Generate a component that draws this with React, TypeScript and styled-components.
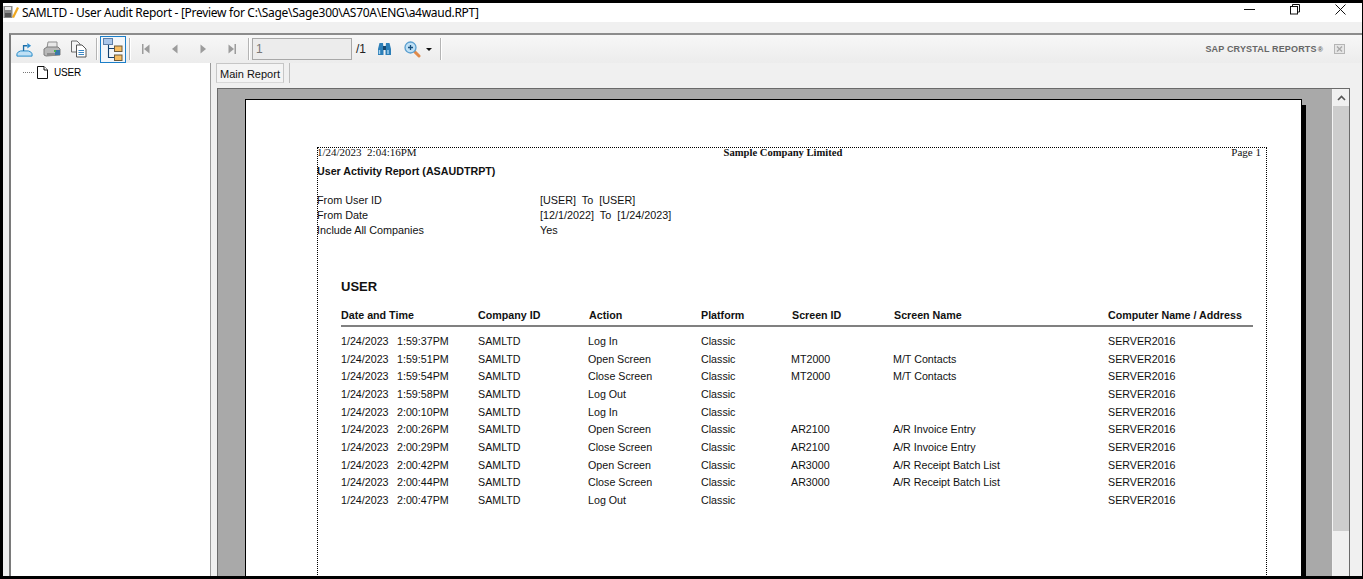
import React from 'react';
import styled, { createGlobalStyle } from 'styled-components';

const GlobalStyle = createGlobalStyle`
  html, body {
    margin: 0;
    padding: 0;
    width: 1363px;
    height: 579px;
    overflow: hidden;
    background: #000;
  }
`;

const Screen = styled.div`
  width: 1363px;
  height: 579px;
  box-sizing: border-box;
  border: solid #000;
  border-width: 3px 1px 3px 3px;
  display: flex;
  flex-direction: column;
  background: #f0f0f0;
  overflow: hidden;
  font-family: "Liberation Sans", Arial, sans-serif;
`;

const TitleBar = styled.div`
  height: 19px;
  flex: none;
  background: #fff;
  display: flex;
  align-items: center;
  color: #000;
`;

const TitleText = styled.span`
  font-family: "Noto Sans", sans-serif;
  font-size: 12px;
  margin-left: 2px;
  white-space: nowrap;
  letter-spacing: -0.29px;
`;

const WindowButtons = styled.div`
  margin-left: auto;
  align-self: flex-start;
  padding: 1px 16px 0 0;
  display: flex;
  gap: 35px;
`;

const Body = styled.div`
  flex: 1;
  min-height: 0;
  padding: 11px 0 0 6px;
  display: flex;
`;

const ViewerFrame = styled.div`
  flex: 1;
  min-width: 0;
  border-top: 2px solid #8c8c8c;
  border-left: 2px solid #7a7a7a;
  display: flex;
  flex-direction: column;
`;

const Toolbar = styled.div`
  height: 28px;
  flex: none;
  display: flex;
  align-items: center;
  background: linear-gradient(#f7f7f7, #ececec);
  padding-right: 17px;
`;

const ToolSlot = styled.div<{ $w?: number }>`
  width: ${(p) => p.$w ?? 27}px;
  height: 28px;
  flex: none;
  display: flex;
  align-items: center;
  justify-content: center;
`;

const ToggleButton = styled.div`
  width: 26px;
  height: 27px;
  box-sizing: border-box;
  border: 1px solid #1b7ec8;
  background: #f3f6f9;
  display: flex;
  align-items: center;
  justify-content: center;
  flex: none;
`;

const ToolSep = styled.div<{ $l: number; $r: number }>`
  width: 1px;
  height: 22px;
  background: #b4b4b4;
  border-right: 1px solid #fff;
  margin: 0 ${(p) => p.$r}px 0 ${(p) => p.$l}px;
  flex: none;
`;

const PageInput = styled.div`
  width: 100px;
  height: 22px;
  box-sizing: border-box;
  border: 1px solid #a8a8a8;
  background: #ececec;
  color: #777;
  font-size: 12px;
  line-height: 20px;
  padding-left: 3px;
  flex: none;
`;

const PageCount = styled.span`
  font-size: 12px;
  color: #222;
  margin-left: 4px;
  width: 14px;
  flex: none;
`;

const Brand = styled.div`
  margin-left: auto;
  display: flex;
  align-items: center;
  font-size: 9px;
  font-weight: bold;
  color: #666;
  letter-spacing: 0.16px;
  white-space: nowrap;
`;

const BrandMark = styled.span`
  font-size: 7px;
  margin-left: 1px;
  margin-right: 11px;
`;

const Panes = styled.div`
  flex: 1;
  min-height: 0;
  display: flex;
`;

const TreePane = styled.div`
  width: 199px;
  flex: none;
  background: #fff;
  border-right: 1px solid #9a9a9a;
  padding-top: 3px;
`;

const TreeRow = styled.div`
  display: flex;
  align-items: center;
  height: 13px;
  padding-left: 12px;
  font-size: 10px;
  color: #000;
`;

const TreeDots = styled.span`
  width: 11px;
  border-top: 1px dotted #777;
  margin-right: 3px;
`;

const TreeLabel = styled.span`
  margin-left: 6px;
  letter-spacing: -0.2px;
`;

const ReportPane = styled.div`
  flex: 1;
  min-width: 0;
  display: flex;
  flex-direction: column;
  padding-left: 6px;
`;

const TabStrip = styled.div`
  height: 25px;
  flex: none;
  display: flex;
  align-items: flex-start;
  margin-left: -1px;
`;

const Tab = styled.div`
  height: 20px;
  width: 68px;
  box-sizing: border-box;
  border: 1px solid #c6c6c6;
  border-bottom-color: #d8d8d8;
  background: #f4f4f4;
  font-size: 11px;
  line-height: 20px;
  text-align: center;
  color: #111;
`;

const TabEnd = styled.div`
  width: 1px;
  height: 20px;
  margin-left: 5px;
  background: #bdbdbd;
`;

const ViewerRow = styled.div`
  flex: 1;
  min-height: 0;
  display: flex;
  margin-right: 12px;
  border: solid #6a6a6a;
  border-width: 1px 1px 0 1px;
  background: #a9a9a9;
  overflow: hidden;
`;

const PageArea = styled.div`
  flex: 1;
  min-width: 0;
  padding: 10px 0 0 27px;
  overflow: hidden;
`;

const Page = styled.div`
  width: 1057px;
  height: 600px;
  box-sizing: border-box;
  background: #fff;
  border: 1px solid #000;
  box-shadow: 4px 6px 0 #000;
  padding: 47px 0 0 71px;
`;

const ReportBox = styled.div`
  width: 950px;
  height: 540px;
  box-sizing: border-box;
  border: 1px dotted #000;
  border-bottom: 0;
  color: #111;
`;

const ReportInner = styled.div`
  margin-left: -1px;
`;

const PageHeader = styled.div`
  display: grid;
  grid-template-columns: 1fr 1fr 1fr;
  font-family: "Liberation Serif", "Times New Roman", serif;
  font-size: 11px;
  line-height: 9px;
  height: 9px;
  padding-right: 5px;
  white-space: pre;
`;

const CompanyName = styled.span`
  font-size: 10.6px;
  font-weight: bold;
  text-align: center;
  margin-left: -12px;
`;

const PageNum = styled.span`
  text-align: right;
`;

const ReportTitle = styled.div`
  font-size: 10.7px;
  font-weight: bold;
  line-height: 14px;
  margin-top: 7px;
`;

const Params = styled.div`
  margin-top: 15px;
  display: grid;
  grid-template-columns: 223px 1fr;
  grid-auto-rows: 15px;
  font-size: 10.8px;
  line-height: 15px;
  white-space: pre;
`;

const Section = styled.div`
  padding-left: 24px;
  padding-right: 13px;
`;

const GroupName = styled.div`
  margin-top: 41px;
  font-size: 13px;
  font-weight: bold;
  line-height: 16px;
`;

const HeadRow = styled.div`
  margin-top: 13px;
  display: grid;
  grid-template-columns: 137px 111px 112px 91px 102px 214px 1fr;
  font-size: 10.7px;
  font-weight: bold;
  line-height: 14px;
  padding-bottom: 3px;
  border-bottom: 2px solid #808080;
  white-space: nowrap;
`;

const Rows = styled.div`
  margin-top: 5px;
  display: grid;
  grid-auto-rows: 17.7px;
`;

const Row = styled.div`
  display: grid;
  grid-template-columns: 137px 110px 113px 90px 102px 215px 1fr;
  align-items: center;
  font-size: 10.7px;
  line-height: 14px;
  white-space: nowrap;
`;

const RowDate = styled.span`
  display: inline-block;
  width: 56px;
`;

const ScrollBar = styled.div`
  width: 16px;
  flex: none;
  display: flex;
  flex-direction: column;
  background: #f0f0f0;
  border-left: 1px solid #f4f4f4;
`;

const ScrollArrow = styled.div`
  height: 17px;
  display: flex;
  align-items: center;
  justify-content: center;
`;

const ScrollThumb = styled.div`
  height: 425px;
  background: #cdcdcd;
`;

const AppIcon = () => (
  <svg width="17" height="15" viewBox="0 0 17 15">
    <rect x="0.5" y="1" width="9" height="12" fill="#8a8a8a" />
    <rect x="2" y="2" width="6" height="3" fill="#e8e8e8" />
    <rect x="2" y="8" width="6" height="4" fill="#555" />
    <path d="M9 12 L14 2 L16 3 L11 13 Z" fill="#f0a820" />
  </svg>
);

const ExportIcon = () => (
  <svg width="17" height="17" viewBox="0 0 18 17" fill="none">
    <path d="M1 15.5 L1 13 Q2 10.5 5 10 L13 10 Q16 10.5 17 13 L17 15.5 Z" fill="#bfe0f5" stroke="#1c86c8" />
    <path d="M8 10 L8 4.5 L12 4.5" stroke="#1c6ea8" strokeWidth="1.4" />
    <path d="M12 1.5 L16 4.5 L12 7.5 Z" fill="#2f8fd0" />
  </svg>
);

const PrintIcon = () => (
  <svg width="18" height="17" viewBox="0 0 18 17">
    <path d="M5 1 L14 1 L14 7 L4 7 Z" fill="#e8e8e8" stroke="#8f8f8f" />
    <path d="M1 8 L4 6 L15 6 L17 8 L17 14 L3 15 L1 14 Z" fill="#b8b8b8" stroke="#7d7d7d" />
    <rect x="12" y="9" width="5" height="5" fill="#3b77a8" />
    <rect x="11" y="9" width="2" height="2" fill="#4caf50" />
    <rect x="4" y="12" width="8" height="3" fill="#8e8e8e" />
  </svg>
);

const CopyIcon = () => (
  <svg width="17" height="18" viewBox="0 0 17 18">
    <path d="M1.5 1 L7 1 L10 4 L10 12 L1.5 12 Z" fill="#f4f4f4" stroke="#6b6b6b" />
    <path d="M6.5 5 L12 5 L16 9 L16 17 L6.5 17 Z" fill="#fff" stroke="#555" />
    <path d="M8.5 10.5 H14 M8.5 12.5 H14 M8.5 14.5 H14" stroke="#3b87c4" />
  </svg>
);

const TreeToggleIcon = () => (
  <svg width="20" height="23" viewBox="0 0 20 23" fill="none">
    <path d="M5.5 7 L5.5 19.5 L11 19.5 M5.5 10.5 L11 10.5" stroke="#12406e" strokeWidth="1.1" />
    <rect x="0.5" y="0.5" width="9" height="6" fill="#a9c6ea" stroke="#5d7ea6" />
    <rect x="11.5" y="8" width="7.5" height="5.5" fill="#f6bd62" stroke="#6d5a3a" />
    <rect x="11.5" y="17" width="7.5" height="5.5" fill="#f6bd62" stroke="#6d5a3a" />
  </svg>
);

const NavIcon = ({ dir, bar }: { dir: 'left' | 'right'; bar?: boolean }) => (
  <svg width="9" height="10" viewBox="0 0 9 10" fill="#9c9c9c">
    {dir === 'left' ? <path d="M7.5 0.5 L7.5 9.5 L2 5 Z" /> : <path d="M1.5 0.5 L1.5 9.5 L7 5 Z" />}
    {bar && <rect x={dir === 'left' ? 0 : 7.5} y="0" width="1.5" height="10" />}
  </svg>
);

const BinocularsIcon = () => (
  <svg width="15" height="14" viewBox="0 0 15 14">
    <path d="M2.5 1 L6 1 L6.5 6 L6.5 13 L1 13 L1 7 Z" fill="#2d7fb8" />
    <path d="M9 1 L12.5 1 L14 7 L14 13 L8.5 13 L8.5 6 Z" fill="#2d7fb8" />
    <rect x="6" y="4" width="3" height="4" fill="#16476e" />
    <path d="M2.5 8 V12 M11 8 V12" stroke="#a9d4ef" strokeWidth="1.4" />
  </svg>
);

const ZoomIcon = () => (
  <svg width="17" height="17" viewBox="0 0 17 17">
    <path d="M10 10 L15 15" stroke="#e08a4a" strokeWidth="3" strokeLinecap="round" />
    <circle cx="6.5" cy="6.5" r="5.5" fill="#bfe0f5" stroke="#5a9fcf" strokeWidth="1.3" />
    <path d="M4 6.5 H9 M6.5 4 V9" stroke="#17507f" strokeWidth="1.3" />
  </svg>
);

const Caret = () => (
  <svg width="6" height="3" viewBox="0 0 6 3">
    <path d="M0 0 H6 L3 3 Z" fill="#111" />
  </svg>
);

const MinIcon = () => (
  <svg width="11" height="11" viewBox="0 0 11 11">
    <path d="M0 5.5 H11" stroke="#111" />
  </svg>
);

const RestoreIcon = () => (
  <svg width="10" height="11" viewBox="0 0 10 11" fill="none" stroke="#111">
    <rect x="0.5" y="2.5" width="7" height="7.5" />
    <path d="M2.5 2.5 V0.5 H9.5 V8 H7.5" />
  </svg>
);

const CloseIcon = () => (
  <svg width="11" height="11" viewBox="0 0 11 11" stroke="#111">
    <path d="M0.5 0.5 L10.5 10.5 M10.5 0.5 L0.5 10.5" />
  </svg>
);

const BrandClose = () => (
  <svg width="11" height="10" viewBox="0 0 11 10" fill="none">
    <rect x="0.5" y="0.5" width="10" height="9" fill="#e6e6e6" stroke="#b5b5b5" />
    <path d="M3 2.5 L8 7.5 M8 2.5 L3 7.5" stroke="#a8a8a8" strokeWidth="1.3" />
  </svg>
);

const DocIcon = () => (
  <svg width="11" height="13" viewBox="0 0 11 13" fill="#fff" stroke="#111">
    <path d="M0.5 0.5 H7 L10.5 4 V12.5 H0.5 Z" />
    <path d="M7 0.5 V4 H10.5" />
  </svg>
);

const UpArrow = () => (
  <svg width="9" height="6" viewBox="0 0 9 6" fill="none">
    <path d="M1 5 L4.5 1.5 L8 5" stroke="#555" strokeWidth="1.6" />
  </svg>
);

interface AuditRow {
  date: string;
  time: string;
  action: string;
  screenId?: string;
  screenName?: string;
}

const auditRows: AuditRow[] = [
  { date: '1/24/2023', time: '1:59:37PM', action: 'Log In' },
  { date: '1/24/2023', time: '1:59:51PM', action: 'Open Screen', screenId: 'MT2000', screenName: 'M/T Contacts' },
  { date: '1/24/2023', time: '1:59:54PM', action: 'Close Screen', screenId: 'MT2000', screenName: 'M/T Contacts' },
  { date: '1/24/2023', time: '1:59:58PM', action: 'Log Out' },
  { date: '1/24/2023', time: '2:00:10PM', action: 'Log In' },
  { date: '1/24/2023', time: '2:00:26PM', action: 'Open Screen', screenId: 'AR2100', screenName: 'A/R Invoice Entry' },
  { date: '1/24/2023', time: '2:00:29PM', action: 'Close Screen', screenId: 'AR2100', screenName: 'A/R Invoice Entry' },
  { date: '1/24/2023', time: '2:00:42PM', action: 'Open Screen', screenId: 'AR3000', screenName: 'A/R Receipt Batch List' },
  { date: '1/24/2023', time: '2:00:44PM', action: 'Close Screen', screenId: 'AR3000', screenName: 'A/R Receipt Batch List' },
  { date: '1/24/2023', time: '2:00:47PM', action: 'Log Out' },
];

export default function App() {
  return (
    <Screen>
      <GlobalStyle />
      <TitleBar>
        <AppIcon />
        <TitleText>SAMLTD - User Audit Report - [Preview for C:\Sage\Sage300\AS70A\ENG\a4waud.RPT]</TitleText>
        <WindowButtons>
          <MinIcon />
          <RestoreIcon />
          <CloseIcon />
        </WindowButtons>
      </TitleBar>
      <Body>
        <ViewerFrame>
          <Toolbar>
            <ToolSlot><ExportIcon /></ToolSlot>
            <ToolSlot><PrintIcon /></ToolSlot>
            <ToolSlot><CopyIcon /></ToolSlot>
            <ToolSep $l={4} $r={2} />
            <ToggleButton><TreeToggleIcon /></ToggleButton>
            <ToolSep $l={3} $r={1} />
            <ToolSlot $w={28.5}><NavIcon dir="left" bar /></ToolSlot>
            <ToolSlot $w={28.5}><NavIcon dir="left" /></ToolSlot>
            <ToolSlot $w={28.5}><NavIcon dir="right" /></ToolSlot>
            <ToolSlot $w={28.5}><NavIcon dir="right" bar /></ToolSlot>
            <ToolSep $l={2} $r={2} />
            <PageInput>1</PageInput>
            <PageCount>/1</PageCount>
            <ToolSlot $w={28}><BinocularsIcon /></ToolSlot>
            <ToolSlot $w={28}><ZoomIcon /></ToolSlot>
            <Caret />
            <ToolSep $l={8} $r={0} />
            <Brand>
              SAP CRYSTAL REPORTS<BrandMark>®</BrandMark>
              <BrandClose />
            </Brand>
          </Toolbar>
          <Panes>
            <TreePane>
              <TreeRow>
                <TreeDots />
                <DocIcon />
                <TreeLabel>USER</TreeLabel>
              </TreeRow>
            </TreePane>
            <ReportPane>
              <TabStrip>
                <Tab>Main Report</Tab>
                <TabEnd />
              </TabStrip>
              <ViewerRow>
                <PageArea>
                  <Page>
                    <ReportBox>
                      <ReportInner>
                        <PageHeader>
                          <span>1/24/2023  2:04:16PM</span>
                          <CompanyName>Sample Company Limited</CompanyName>
                          <PageNum>Page 1</PageNum>
                        </PageHeader>
                        <ReportTitle>User Activity Report (ASAUDTRPT)</ReportTitle>
                        <Params>
                          <span>From User ID</span>
                          <span>[USER]  To  [USER]</span>
                          <span>From Date</span>
                          <span>[12/1/2022]  To  [1/24/2023]</span>
                          <span>Include All Companies</span>
                          <span>Yes</span>
                        </Params>
                        <Section>
                          <GroupName>USER</GroupName>
                          <HeadRow>
                            <span>Date and Time</span>
                            <span>Company ID</span>
                            <span>Action</span>
                            <span>Platform</span>
                            <span>Screen ID</span>
                            <span>Screen Name</span>
                            <span>Computer Name / Address</span>
                          </HeadRow>
                          <Rows>
                            {auditRows.map((row) => (
                              <Row key={row.time}>
                                <span><RowDate>{row.date}</RowDate>{row.time}</span>
                                <span>SAMLTD</span>
                                <span>{row.action}</span>
                                <span>Classic</span>
                                <span>{row.screenId}</span>
                                <span>{row.screenName}</span>
                                <span>SERVER2016</span>
                              </Row>
                            ))}
                          </Rows>
                        </Section>
                      </ReportInner>
                    </ReportBox>
                  </Page>
                </PageArea>
                <ScrollBar>
                  <ScrollArrow><UpArrow /></ScrollArrow>
                  <ScrollThumb />
                </ScrollBar>
              </ViewerRow>
            </ReportPane>
          </Panes>
        </ViewerFrame>
      </Body>
    </Screen>
  );
}
